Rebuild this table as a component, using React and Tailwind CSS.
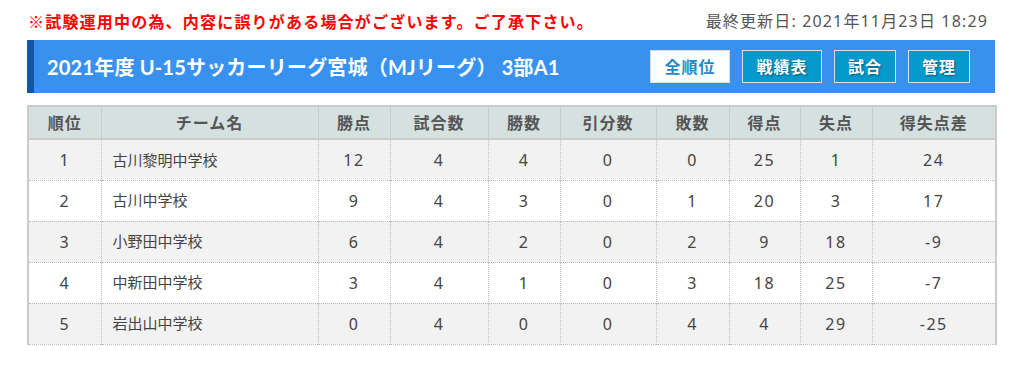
import React from "react";

const rows = [
  ["1", "古川黎明中学校", 12, 4, 4, 0, 0, 25, 1, 24],
  ["2", "古川中学校", 9, 4, 3, 0, 1, 20, 3, 17],
  ["3", "小野田中学校", 6, 4, 2, 0, 2, 9, 18, -9],
  ["4", "中新田中学校", 3, 4, 1, 0, 3, 18, 25, -7],
  ["5", "岩出山中学校", 0, 4, 0, 0, 4, 4, 29, -25],
];

const headers = ["順位", "チーム名", "勝点", "試合数", "勝数", "引分数", "敗数", "得点", "失点", "得失点差"];
const widths = ["w-[73px]", "w-[217px]", "w-[72px]", "w-[98px]", "w-[72px]", "w-[96px]", "w-[73px]", "w-[71px]", "w-[72px]", "w-[124px]"];

const navs = [
  { label: "全順位", active: true, w: "w-[80px]" },
  { label: "戦績表", w: "w-[80px]" },
  { label: "試合", w: "w-[62px]" },
  { label: "管理", w: "w-[62px]" },
];

export default function App() {
  return (
    <div className="w-[1014px] h-[367px] bg-white font-['Lato','Noto_Sans_CJK_JP',sans-serif]">
      <div className="ml-[27px] w-[968px]">
        <div className="flex h-[40px] items-center justify-between pl-[1px] pr-[7px] pt-[2px]">
          <p className="text-[16px] font-bold tracking-[1.2px] text-[#ff0000] font-['Noto_Sans_CJK_JP',sans-serif]">
            ※試験運用中の為、内容に誤りがある場合がございます。ご了承下さい。
          </p>
          <p className="text-[16px] text-[#555] tracking-[1.15px] font-['Noto_Sans','Noto_Sans_CJK_JP',sans-serif]">
            最終更新日: 2021年11月23日 18:29
          </p>
        </div>

        <div className="flex h-[53px] items-center justify-between border-l-[7px] border-[#0f58a6] bg-[#3891ee] pl-[13px] pr-[25px]">
          <h1 className="text-[20px] font-bold tracking-[0.2px] text-white">
            2021年度 U-15サッカーリーグ宮城（MJリーグ） 3部A1
          </h1>
          <div className="flex gap-[12px]">
            {navs.map((n) => (
              <button
                key={n.label}
                className={`${n.w} h-[33px] border text-[16px] font-bold tracking-[1px] ${
                  n.active
                    ? "border-[#ddd] bg-white text-[#1a8cc8]"
                    : "border-[#dde] bg-[#0599cc] text-white [text-shadow:1px_1px_2px_rgba(0,0,0,0.45)]"
                }`}
              >
                {n.label}
              </button>
            ))}
          </div>
        </div>

        <table className="mt-[12px] w-[968px] table-fixed border-collapse border-x-2 border-t-2 border-[#cccccc] text-[#444]">
          <thead>
            <tr className="h-[33px] bg-[#d5e0e0] border-b-2 border-[#cccccc]">
              {headers.map((h, i) => (
                <th
                  key={h}
                  className={`${widths[i]} border-l border-dotted border-[#bbb] first:border-l-0 font-bold text-[#555] text-[16px] tracking-[1px]`}
                >
                  {h}
                </th>
              ))}
            </tr>
          </thead>
          <tbody>
            {rows.map((r, ri) => (
              <tr
                key={r[0]}
                className={`h-[41px] border-b border-dotted border-[#bbb] ${ri % 2 === 0 ? "bg-[#f2f2f2]" : "bg-white"}`}
              >
                {r.map((c, i) => (
                  <td
                    key={i}
                    className={`border-l border-dotted border-[#bbb] first:border-l-0 ${
                      i === 1
                        ? "pl-[11px] text-left text-[15px] font-['Noto_Sans_CJK_JP',sans-serif]"
                        : "text-center text-[16px] tracking-[1.5px] font-['Noto_Sans',sans-serif]"
                    }`}
                  >
                    {c}
                  </td>
                ))}
              </tr>
            ))}
          </tbody>
        </table>
      </div>
    </div>
  );
}
